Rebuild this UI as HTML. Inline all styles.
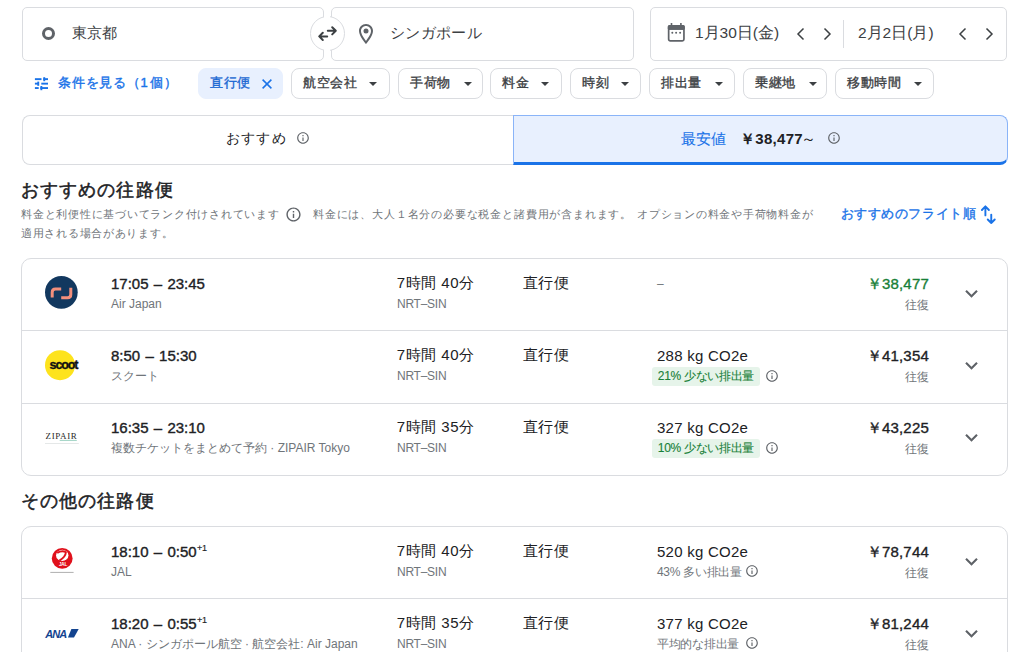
<!DOCTYPE html>
<html lang="ja">
<head>
<meta charset="utf-8">
<style>
*{box-sizing:border-box;margin:0;padding:0}
html,body{width:1024px;height:652px;overflow:hidden;background:#fff}
body{position:relative;font-family:"Liberation Sans",sans-serif;color:#202124}
.a{position:absolute;white-space:nowrap}
.box{position:absolute;border:1px solid #dadce0;border-radius:5px;background:#fff}
.t16{font-size:15px;line-height:20px;color:#3c4043}
.chip{position:absolute;top:68px;height:31px;border:1px solid #dadce0;border-radius:8px;background:#fff}
.chip span{position:absolute;top:5px;left:11px;font-size:13px;letter-spacing:0.55px;line-height:18px;color:#3c4043;-webkit-text-stroke:0.35px #3c4043}
.dd{position:absolute;top:13px;width:0;height:0;border-left:4px solid transparent;border-right:4px solid transparent;border-top:4px solid #3c4043}
.card{position:absolute;left:21px;width:987px;border:1px solid #dadce0;border-radius:10px;background:#fff;overflow:hidden}
.dv{position:absolute;left:0;width:985px;height:1px;background:#dadce0}
.row{position:absolute;left:0.5px;width:984px;height:72px}
.tm{position:absolute;left:88.5px;top:16px;font-size:15px;line-height:18px;color:#202124;-webkit-text-stroke:0.38px #202124;word-spacing:1.1px}
.al{position:absolute;left:88.5px;top:36.5px;font-size:12px;line-height:16px;color:#70757a}
.du{position:absolute;left:374.3px;top:15px;font-size:15px;line-height:18px;color:#202124;letter-spacing:0.5px}
.rt{position:absolute;left:374.5px;top:37px;font-size:12px;line-height:16px;color:#70757a;letter-spacing:-0.25px}
.st{position:absolute;left:500.5px;top:15px;font-size:15px;line-height:18px;color:#202124;letter-spacing:0.4px}
.em{position:absolute;left:634.5px;top:15.5px;font-size:15px;line-height:18px;color:#202124;letter-spacing:0.25px}
.eb{position:absolute;left:629.3px;top:36px;height:18.6px;padding:0 6px;font-size:12px;line-height:18.6px;color:#70757a;letter-spacing:-0.3px}
.eb.g{background:#e6f4ea;color:#188038;border-radius:3px;-webkit-text-stroke:0.12px #188038}
.pr{position:absolute;right:77.5px;top:16px;font-size:15px;line-height:18px;color:#202124;-webkit-text-stroke:0.35px #202124;text-align:right;letter-spacing:0.2px}
.rw{position:absolute;right:78px;top:37.5px;font-size:12px;line-height:16px;color:#70757a;text-align:right}
.chev{position:absolute;left:936.5px;top:22.3px}
.logo{position:absolute}
</style>
</head>
<body>

<!-- search row -->
<div class="box" style="left:22px;top:7px;width:302px;height:54px"></div>
<div class="box" style="left:331px;top:7px;width:303px;height:54px"></div>
<div class="a" style="left:310px;top:16px;width:35px;height:35px;border-radius:50%;border:1px solid #dadce0;background:#fff"></div>
<div class="a" style="left:324.3px;top:15px;width:6.2px;height:37px;background:#fff"></div>
<svg class="a" style="left:312px;top:20px" width="30" height="26" viewBox="0 0 30 26"><g fill="none" stroke="#3c4043" stroke-width="2" stroke-linecap="round" stroke-linejoin="round"><path d="M15.8 10.8H23.6M20.2 7.2L23.8 10.8L20.2 14.4"/><path d="M15.2 16.4H7.4M10.8 12.8L7.2 16.4L10.8 20"/></g></svg>
<div class="a" style="left:41.5px;top:27.2px;width:13.3px;height:13.3px;border-radius:50%;border:3px solid #5f6368"></div>
<div class="a t16" style="left:72px;top:23px">東京都</div>
<svg class="a" style="left:354px;top:22px" width="24" height="24" viewBox="0 0 24 24"><path fill="#5f6368" d="M12 2C8.13 2 5 5.13 5 9c0 5.25 7 13 7 13s7-7.75 7-13c0-3.87-3.13-7-7-7zM7 9c0-2.76 2.24-5 5-5s5 2.24 5 5c0 2.88-2.88 7.19-5 9.88C9.92 16.21 7 11.85 7 9z"/><circle fill="#5f6368" cx="12" cy="9" r="2.5"/></svg>
<div class="a t16" style="left:390px;top:22.5px;letter-spacing:0.35px">シンガポール</div>

<div class="box" style="left:650px;top:7px;width:357px;height:54px"></div>
<svg class="a" style="left:666px;top:22px" width="20" height="21" viewBox="0 0 20 21"><path fill="#5f6368" d="M4.7 1h1.6v3h-1.6zM14.1 1h1.6v3h-1.6z"/><rect x="2.65" y="3.75" width="15.3" height="15.2" rx="1.6" fill="none" stroke="#5f6368" stroke-width="1.7"/><rect x="1.8" y="2.9" width="17" height="4.9" rx="1.5" fill="#5f6368"/><rect x="2.6" y="6" width="15.4" height="1.8" fill="#5f6368"/><circle cx="6.3" cy="10.7" r="1" fill="#5f6368"/><circle cx="10.1" cy="10.7" r="1" fill="#5f6368"/><circle cx="14.1" cy="10.7" r="1" fill="#5f6368"/></svg>
<div class="a t16" style="left:695px;top:23px;font-size:15.5px">1月30日(金)</div>
<svg class="a" style="left:794px;top:26px" width="12" height="16" viewBox="0 0 12 16"><path d="M9.5 2.5L4 8l5.5 5.5" fill="none" stroke="#3c4043" stroke-width="1.5"/></svg>
<svg class="a" style="left:822px;top:26px" width="12" height="16" viewBox="0 0 12 16"><path d="M2.5 2.5L8 8l-5.5 5.5" fill="none" stroke="#3c4043" stroke-width="1.5"/></svg>
<div class="a" style="left:843px;top:19.5px;width:1px;height:28px;background:#dadce0"></div>
<div class="a t16" style="left:858px;top:23px;font-size:15.5px">2月2日(月)</div>
<svg class="a" style="left:956px;top:26px" width="12" height="16" viewBox="0 0 12 16"><path d="M9.5 2.5L4 8l5.5 5.5" fill="none" stroke="#3c4043" stroke-width="1.5"/></svg>
<svg class="a" style="left:984px;top:26px" width="12" height="16" viewBox="0 0 12 16"><path d="M2.5 2.5L8 8l-5.5 5.5" fill="none" stroke="#3c4043" stroke-width="1.5"/></svg>

<!-- filter row -->
<svg class="a" style="left:33px;top:76px" width="17" height="16" viewBox="0 0 17 16"><g fill="#1a73e8"><rect x="1.9" y="2.2" width="6.6" height="1.9"/><rect x="10.3" y="2.2" width="4.7" height="1.9"/><rect x="10.3" y="1.2" width="1.9" height="4"/><rect x="1.9" y="6.7" width="3.6" height="1.9"/><rect x="4.3" y="5.6" width="1.9" height="4.2"/><rect x="8.3" y="6.7" width="6.7" height="1.9"/><rect x="1.9" y="11.1" width="3.8" height="1.9"/><rect x="7.4" y="10" width="1.9" height="4.2"/><rect x="7.4" y="11.1" width="7.6" height="1.9"/></g></svg>
<div class="a" style="left:58px;top:73.5px;font-size:13px;line-height:18px;color:#1a73e8;-webkit-text-stroke:0.4px #1a73e8;letter-spacing:0.75px">条件を見る（1<span style="margin-left:1.5px">個</span>）</div>
<div class="chip" style="left:198.3px;width:84.7px;background:#e8f0fe;border-color:#e8f0fe"><span style="color:#1967d2;-webkit-text-stroke-color:#1967d2">直行便</span>
<svg style="position:absolute;left:62px;top:9px" width="12" height="12" viewBox="0 0 12 12"><path d="M1.6 1.6l8.8 8.8M10.4 1.6l-8.8 8.8" stroke="#1a73e8" stroke-width="1.5"/></svg></div>
<div class="chip" style="left:291.3px;width:98.4px"><span>航空会社</span><i class="dd" style="left:77px"></i></div>
<div class="chip" style="left:398px;width:84.5px"><span>手荷物</span><i class="dd" style="left:64.5px"></i></div>
<div class="chip" style="left:490.3px;width:72px"><span>料金</span><i class="dd" style="left:50px"></i></div>
<div class="chip" style="left:570.4px;width:70.5px"><span>時刻</span><i class="dd" style="left:50px"></i></div>
<div class="chip" style="left:649.4px;width:85.3px"><span>排出量</span><i class="dd" style="left:64.5px"></i></div>
<div class="chip" style="left:743px;width:84px"><span>乗継地</span><i class="dd" style="left:64.5px"></i></div>
<div class="chip" style="left:835px;width:98.75px"><span>移動時間</span><i class="dd" style="left:78px"></i></div>

<!-- tabs -->
<div class="a" style="left:21.5px;top:114.7px;width:492px;height:50px;border:1px solid #dadce0;border-right:none;border-radius:8px 0 0 8px"></div>
<div class="a" style="left:225.5px;top:128.5px;font-size:14px;letter-spacing:1.4px;line-height:19px;color:#202124">おすすめ</div>
<svg class="a" style="left:296.4px;top:131.4px" width="14" height="14" viewBox="0 0 24 24"><path fill="#5f6368" d="M11 7h2v2h-2zm0 4h2v6h-2zm1-9C6.48 2 2 6.48 2 12s4.48 10 10 10 10-4.48 10-10S17.52 2 12 2zm0 18c-4.41 0-8-3.59-8-8s3.59-8 8-8 8 3.59 8 8-3.59 8-8 8z"/></svg>
<div class="a" style="left:513.4px;top:114.7px;width:494.6px;height:50px;border:1px solid #8ab4f8;border-bottom:3px solid #1a73e8;border-radius:0 8px 8px 0;background:#e8f0fe"></div>
<div class="a" style="left:681px;top:129px;font-size:15px;line-height:19px;color:#1a73e8;-webkit-text-stroke:0.1px #1a73e8">最安値</div>
<div class="a" style="left:740px;top:129px;font-size:15px;line-height:19px;color:#202124"><b style="letter-spacing:0.3px">￥38,477</b><span style="margin-left:-1.5px">～</span></div>
<svg class="a" style="left:826.5px;top:131.4px" width="14" height="14" viewBox="0 0 24 24"><path fill="#5f6368" d="M11 7h2v2h-2zm0 4h2v6h-2zm1-9C6.48 2 2 6.48 2 12s4.48 10 10 10 10-4.48 10-10S17.52 2 12 2zm0 18c-4.41 0-8-3.59-8-8s3.59-8 8-8 8 3.59 8 8-3.59 8-8 8z"/></svg>

<!-- heading -->
<div class="a" style="left:21px;top:177.5px;font-size:18px;letter-spacing:1.1px;line-height:24px;color:#202124;-webkit-text-stroke:0.5px #202124">おすすめの往路便</div>
<div class="a" style="left:21px;top:205px;font-size:11px;letter-spacing:0.76px;line-height:18px;color:#70757a">料金と利便性に基づいてランク付けされています</div>
<svg class="a" style="left:284.6px;top:206.2px" width="17" height="17" viewBox="0 0 24 24"><path fill="#5f6368" d="M11 7h2v2h-2zm0 4h2v6h-2zm1-9C6.48 2 2 6.48 2 12s4.48 10 10 10 10-4.48 10-10S17.52 2 12 2zm0 18c-4.41 0-8-3.59-8-8s3.59-8 8-8 8 3.59 8 8-3.59 8-8 8z"/></svg>
<div class="a" style="left:313px;top:205px;font-size:11px;letter-spacing:0.82px;line-height:18px;color:#70757a">料金には、大人１名分の必要な税金と諸費用が含まれます。</div>
<div class="a" style="left:637px;top:205px;font-size:11px;letter-spacing:0.76px;line-height:18px;color:#70757a">オプションの料金や手荷物料金が</div>
<div class="a" style="left:21px;top:224px;font-size:11px;letter-spacing:0.72px;line-height:18px;color:#70757a">適用される場合があります。</div>
<div class="a" style="left:840.5px;top:204.5px;font-size:13px;line-height:18px;color:#1a73e8;-webkit-text-stroke:0.35px #1a73e8;letter-spacing:0.6px">おすすめのフライト順</div>
<svg class="a" style="left:978px;top:203px" width="20" height="24" viewBox="0 0 20 24"><g fill="none" stroke="#1a73e8" stroke-width="1.9" stroke-linecap="round" stroke-linejoin="round"><path d="M7.4 3.4V12.4M3.9 7L7.4 3.4L10.9 7"/><path d="M13.25 11.6V20M9.75 16.5L13.25 20L16.75 16.5"/></g></svg>

<!-- card 1 -->
<div class="card" style="top:258px;height:218px">
 <div class="dv" style="top:71px"></div><div class="dv" style="top:143.5px"></div>
 <div class="row" style="top:0">
  <svg class="logo" style="left:22.9px;top:17.2px" width="33" height="33" viewBox="0 0 33 33"><circle cx="16.35" cy="16.35" r="16.35" fill="#12385f"/><path d="M7.2 21.6V16.2Q7.2 13 10.4 13H16.2M16.2 21.8H22.6Q25.8 21.8 25.8 18.6V11.8" fill="none" stroke="#f28f7c" stroke-width="3"/></svg>
  <div class="tm">17:05 – 23:45</div>
  <div class="al">Air Japan</div>
  <div class="du">7時間 40分</div>
  <div class="rt">NRT–SIN</div>
  <div class="st">直行便</div>
  <div class="em" style="color:#70757a;font-size:12px">–</div>
  <div class="pr" style="color:#188038;-webkit-text-stroke-color:#188038">￥38,477</div>
  <div class="rw">往復</div>
  <svg class="chev" width="25" height="25" viewBox="0 0 24 24"><path fill="#5f6368" d="M16.59 8.59L12 13.17 7.41 8.59 6 10l6 6 6-6z"/></svg>
 </div>
 <div class="row" style="top:72px">
  <svg class="logo" style="left:22.6px;top:18.9px" width="36" height="32" viewBox="0 0 36 32"><circle cx="15" cy="15.15" r="15" fill="#fde31d"/><text x="4.6" y="18.9" font-family="Liberation Sans" font-weight="bold" font-size="12.5" letter-spacing="-1.1" fill="#111" stroke="#111" stroke-width="0.35">scoot</text></svg>
  <div class="tm">8:50 – 15:30</div>
  <div class="al">スクート</div>
  <div class="du">7時間 40分</div>
  <div class="rt">NRT–SIN</div>
  <div class="st">直行便</div>
  <div class="em">288 kg CO2e</div>
  <div class="eb g">21% 少ない排出量</div>
  <svg class="a" style="left:742px;top:38.2px" width="14" height="14" viewBox="0 0 24 24"><path fill="#5f6368" d="M11 7h2v2h-2zm0 4h2v6h-2zm1-9C6.48 2 2 6.48 2 12s4.48 10 10 10 10-4.48 10-10S17.52 2 12 2zm0 18c-4.41 0-8-3.59-8-8s3.59-8 8-8 8 3.59 8 8-3.59 8-8 8z"/></svg>
  <div class="pr">￥41,354</div>
  <div class="rw">往復</div>
  <svg class="chev" width="25" height="25" viewBox="0 0 24 24"><path fill="#5f6368" d="M16.59 8.59L12 13.17 7.41 8.59 6 10l6 6 6-6z"/></svg>
 </div>
 <div class="row" style="top:144px">
  <svg class="logo" style="left:22.7px;top:21.8px" width="36" height="22" viewBox="0 0 36 22"><text x="0.6" y="14.1" font-family="Liberation Serif" font-size="9" letter-spacing="0.6" fill="#2a2a2a">ZIPAIR</text><rect x="14.7" y="14.9" width="17.1" height="1" fill="#9fd3c4"/><rect x="0" y="18.2" width="33.8" height="0.8" fill="#dfe3e3"/></svg>
  <div class="tm">16:35 – 23:10</div>
  <div class="al">複数チケットをまとめて予約 · ZIPAIR Tokyo</div>
  <div class="du">7時間 35分</div>
  <div class="rt">NRT–SIN</div>
  <div class="st">直行便</div>
  <div class="em">327 kg CO2e</div>
  <div class="eb g">10% 少ない排出量</div>
  <svg class="a" style="left:742px;top:38.2px" width="14" height="14" viewBox="0 0 24 24"><path fill="#5f6368" d="M11 7h2v2h-2zm0 4h2v6h-2zm1-9C6.48 2 2 6.48 2 12s4.48 10 10 10 10-4.48 10-10S17.52 2 12 2zm0 18c-4.41 0-8-3.59-8-8s3.59-8 8-8 8 3.59 8 8-3.59 8-8 8z"/></svg>
  <div class="pr">￥43,225</div>
  <div class="rw">往復</div>
  <svg class="chev" width="25" height="25" viewBox="0 0 24 24"><path fill="#5f6368" d="M16.59 8.59L12 13.17 7.41 8.59 6 10l6 6 6-6z"/></svg>
 </div>
</div>

<div class="a" style="left:21px;top:488.5px;font-size:18px;letter-spacing:1.1px;line-height:24px;color:#202124;-webkit-text-stroke:0.5px #202124">その他の往路便</div>

<!-- card 2 -->
<div class="card" style="top:526px;height:200px">
 <div class="dv" style="top:71px"></div>
 <div class="row" style="top:0">
  <svg class="logo" style="left:27.5px;top:18.6px" width="26" height="30" viewBox="0 0 26 30"><circle cx="12.2" cy="12.4" r="10.4" fill="#e0111c"/><ellipse cx="12.25" cy="9.4" rx="6.2" ry="5.6" fill="#fff"/><path d="M7.2 6.9Q12.3 4 15.9 6.3Q15.6 11 9.4 14.6" fill="none" stroke="#e0111c" stroke-width="1.9"/><text x="13" y="19.9" font-size="4.6" text-anchor="middle" fill="#fff" font-family="Liberation Sans" font-weight="bold" letter-spacing="-0.2">JAL</text><rect x="0.3" y="25.9" width="23.3" height="1" fill="#b0b0b0"/></svg>
  <div class="tm">18:10 – 0:50<sup style="font-size:9px;line-height:0;position:relative;top:-6.5px;vertical-align:baseline;-webkit-text-stroke:0.15px #202124;margin-left:0.5px;letter-spacing:-0.3px">+1</sup></div>
  <div class="al">JAL</div>
  <div class="du">7時間 40分</div>
  <div class="rt">NRT–SIN</div>
  <div class="st">直行便</div>
  <div class="em">520 kg CO2e</div>
  <div class="eb" style="padding:0;left:634.5px">43% 多い排出量</div>
  <svg class="a" style="left:722.9px;top:36.8px" width="14" height="14" viewBox="0 0 24 24"><path fill="#5f6368" d="M11 7h2v2h-2zm0 4h2v6h-2zm1-9C6.48 2 2 6.48 2 12s4.48 10 10 10 10-4.48 10-10S17.52 2 12 2zm0 18c-4.41 0-8-3.59-8-8s3.59-8 8-8 8 3.59 8 8-3.59 8-8 8z"/></svg>
  <div class="pr">￥78,744</div>
  <div class="rw">往復</div>
  <svg class="chev" width="25" height="25" viewBox="0 0 24 24"><path fill="#5f6368" d="M16.59 8.59L12 13.17 7.41 8.59 6 10l6 6 6-6z"/></svg>
 </div>
 <div class="row" style="top:72px">
  <svg class="logo" style="left:21.5px;top:26.6px" width="40" height="16" viewBox="0 0 40 16"><text x="1.2" y="11.8" font-family="Liberation Sans" font-weight="bold" font-style="italic" font-size="11" letter-spacing="-0.9" fill="#13448f">ANA</text><path d="M27.4 3H34.7L30 11.6H23.9z" fill="#13448f"/></svg>
  <div class="tm">18:20 – 0:55<sup style="font-size:9px;line-height:0;position:relative;top:-6.5px;vertical-align:baseline;-webkit-text-stroke:0.15px #202124;margin-left:0.5px;letter-spacing:-0.3px">+1</sup></div>
  <div class="al">ANA · シンガポール航空 · 航空会社: Air Japan</div>
  <div class="du">7時間 35分</div>
  <div class="rt">NRT–SIN</div>
  <div class="st">直行便</div>
  <div class="em">377 kg CO2e</div>
  <div class="eb" style="padding:0;left:634.5px">平均的な排出量</div>
  <svg class="a" style="left:722.9px;top:36.8px" width="14" height="14" viewBox="0 0 24 24"><path fill="#5f6368" d="M11 7h2v2h-2zm0 4h2v6h-2zm1-9C6.48 2 2 6.48 2 12s4.48 10 10 10 10-4.48 10-10S17.52 2 12 2zm0 18c-4.41 0-8-3.59-8-8s3.59-8 8-8 8 3.59 8 8-3.59 8-8 8z"/></svg>
  <div class="pr">￥81,244</div>
  <div class="rw">往復</div>
  <svg class="chev" width="25" height="25" viewBox="0 0 24 24"><path fill="#5f6368" d="M16.59 8.59L12 13.17 7.41 8.59 6 10l6 6 6-6z"/></svg>
 </div>
</div>

</body>
</html>
